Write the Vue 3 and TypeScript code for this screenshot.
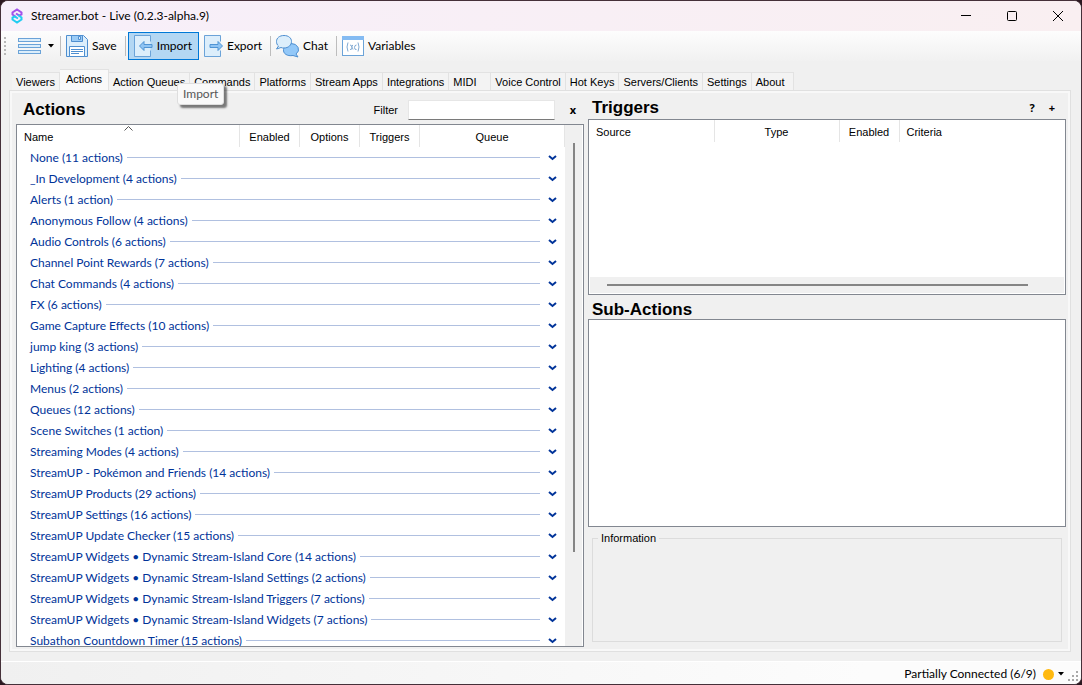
<script setup lang="ts">
import { ref } from 'vue'

interface Group {
  name: string
  count: number
}

const tabs: string[] = [
  'Viewers', 'Actions', 'Action Queues', 'Commands', 'Platforms', 'Stream Apps', 'Integrations',
  'MIDI', 'Voice Control', 'Hot Keys', 'Servers/Clients', 'Settings', 'About',
]
const activeTab = ref('Actions')
const filter = ref('')

const groups: Group[] = [
  { name: 'None', count: 11 },
  { name: '_In Development', count: 4 },
  { name: 'Alerts', count: 1 },
  { name: 'Anonymous Follow', count: 4 },
  { name: 'Audio Controls', count: 6 },
  { name: 'Channel Point Rewards', count: 7 },
  { name: 'Chat Commands', count: 4 },
  { name: 'FX', count: 6 },
  { name: 'Game Capture Effects', count: 10 },
  { name: 'jump king', count: 3 },
  { name: 'Lighting', count: 4 },
  { name: 'Menus', count: 2 },
  { name: 'Queues', count: 12 },
  { name: 'Scene Switches', count: 1 },
  { name: 'Streaming Modes', count: 4 },
  { name: 'StreamUP - Pokémon and Friends', count: 14 },
  { name: 'StreamUP Products', count: 29 },
  { name: 'StreamUP Settings', count: 16 },
  { name: 'StreamUP Update Checker', count: 15 },
  { name: 'StreamUP Widgets • Dynamic Stream-Island Core', count: 14 },
  { name: 'StreamUP Widgets • Dynamic Stream-Island Settings', count: 2 },
  { name: 'StreamUP Widgets • Dynamic Stream-Island Triggers', count: 7 },
  { name: 'StreamUP Widgets • Dynamic Stream-Island Widgets', count: 7 },
  { name: 'Subathon Countdown Timer', count: 15 },
]

const label = (g: Group): string => `${g.name} (${g.count} ${g.count === 1 ? 'action' : 'actions'})`
</script>

<template>
  <div class="window">
    <header class="titlebar">
      <svg class="logo" width="12" height="16" viewBox="0 0 12 16" fill="none" stroke-width="2">
        <path d="M5 9 1.500 6.500V4.500L6 1.500l4.500 3v2L8.500 7.500 5 5.500" stroke="#a352ea" />
        <path d="M7 7l3.500 2.500v2L6 14.500l-4.500-3v-2L3.500 8.500 7 10.500" stroke="#22cdf0" />
      </svg>
      <span class="title">Streamer.bot - Live (0.2.3-alpha.9)</span>
      <div class="caption">
        <button aria-label="Minimize"><svg width="12" height="12"><path d="M1 5.500h10" /></svg></button>
        <button aria-label="Maximize"><svg width="12" height="12"><rect x="1.500" y="1.500" width="9" height="9" rx="1" /></svg></button>
        <button aria-label="Close"><svg width="12" height="12"><path d="M1 1l10 10M11 1 1 11" /></svg></button>
      </div>
    </header>

    <nav class="toolbar" aria-label="Main toolbar">
      <span class="grip"></span>
      <button class="tool menu" aria-label="Menu">
        <svg width="24" height="20" fill="#dceefb" stroke="#6ba3d8">
          <rect x=".5" y="2.500" width="22" height="3" />
          <rect x=".5" y="8.500" width="22" height="3" />
          <rect x=".5" y="14.500" width="22" height="3" />
        </svg>
        <svg width="6" height="4"><path d="M0 0h6L3 3.500z" /></svg>
      </button>
      <span class="sep"></span>
      <button class="tool">
        <svg width="22" height="22" fill="#dceefb" stroke="#4f8fd0">
          <path d="M.5.5h17l4 4v17H.5z" />
          <path d="M5.500.5h11v6h-11z" fill="#9bccf6" />
          <path d="M12.500 1.500h2v3h-2z" />
          <path d="M3.500 11.500h15v10h-15z" fill="#fff" />
          <path d="M5 14.500h12M5 16.500h12M5 18.500h8" />
        </svg>Save
      </button>
      <span class="sep"></span>
      <button class="tool hot">
        <svg width="19" height="22" fill="#dceefb" stroke="#6ba3d8">
          <path d="M16.500 6.500v-6H.5v21h16v-6" />
          <path d="M5.500 11l4.500-4.500v3h8v3h-8v3z" fill="#8fc4f3" stroke="#4f94d4" />
        </svg>Import
      </button>
      <button class="tool">
        <svg width="19" height="22" fill="#dceefb" stroke="#6ba3d8">
          <path d="M16.500 6.500v-6H.5v21h16v-6" />
          <path d="M18.500 11L14 6.500v3H6v3h8v3z" fill="#8fc4f3" stroke="#4f94d4" />
        </svg>Export
      </button>
      <span class="sep"></span>
      <button class="tool">
        <svg width="23" height="23" fill="#dceefb" stroke="#4f8fd0">
          <path d="M15 8.500a7.500 6 0 0 1 5 10.500l2 3-5-1.500c-6 1-10-2-9.500-6 .5-3.500 3-6 7.500-6z" fill="#93c8f8" />
          <path d="M8 .5c4.500 0 7.500 2.500 7.500 6s-3 6.500-7.500 6.500c-1 0-2 0-3-.5L.5 14l2-3c-1.500-1-2-3-2-4.500C.5 3 3.500.5 8 .5z" />
        </svg>Chat
      </button>
      <span class="sep"></span>
      <button class="tool">
        <svg width="22" height="22" fill="none" stroke="#6ba3d8">
          <rect x=".5" y="1.500" width="21" height="19" fill="#fff" />
          <path d="M0 3h22" stroke="#84bbf2" stroke-width="4" />
          <path d="M6 7.500q-2 4.500 0 9M16 7.500q2 4.500 0 9M8 10q2 0 2 2.500T8 14.500M11 10q-2 1-1 2.500t1 2M14.500 10q-2 0-2 2.500t2 2" stroke="#7fa9d3" />
        </svg>Variables
      </button>
    </nav>

    <div class="tabs" role="tablist">
      <button
        v-for="t in tabs"
        :key="t"
        role="tab"
        class="tab"
        :class="{ active: t === activeTab }"
        :aria-selected="t === activeTab"
        @click="activeTab = t"
      >{{ t }}</button>
      <div class="tooltip" role="tooltip">Import</div>
    </div>

    <main class="page">
      <section class="left">
        <div class="head">
          <h2>Actions</h2>
          <label for="filter">Filter</label>
          <input id="filter" v-model="filter" type="text">
          <button class="mini" aria-label="Clear filter" @click="filter = ''">x</button>
        </div>
        <div class="box actions">
          <div class="scroll">
            <table>
              <thead>
                <tr>
                  <th class="start">Name
                    <svg class="sort" width="9" height="5"><path d="M.5 4.500l4-4 4 4" /></svg>
                  </th>
                  <th class="flag">Enabled</th>
                  <th class="flag">Options</th>
                  <th class="flag">Triggers</th>
                  <th class="queue">Queue</th>
                </tr>
              </thead>
              <tbody>
                <tr v-for="g in groups" :key="g.name">
                  <td colspan="5">
                    <button class="group">
                      <span>{{ label(g) }}</span>
                      <i></i>
                      <svg width="9" height="6"><path d="M1 1l3.500 3L8 1" /></svg>
                    </button>
                  </td>
                </tr>
              </tbody>
            </table>
          </div>
          <div class="vbar"><span></span></div>
        </div>
      </section>

      <section class="right">
        <div class="head triggers-head">
          <h2>Triggers</h2>
          <button class="mini" aria-label="Help">?</button>
          <button class="mini" aria-label="Add trigger">+</button>
        </div>
        <div class="box triggers">
          <table>
            <thead>
              <tr>
                <th class="wide start">Source</th>
                <th class="wide">Type</th>
                <th class="flag">Enabled</th>
                <th class="start last">Criteria</th>
              </tr>
            </thead>
          </table>
          <div class="hbar"><span></span></div>
        </div>
        <h2 class="sub">Sub-Actions</h2>
        <div class="box subactions"></div>
        <fieldset>
          <legend>Information</legend>
        </fieldset>
      </section>
    </main>

    <footer class="status">
      <button>Partially Connected (6/9) <b></b>
        <svg width="6" height="4"><path d="M0 0h6L3 3.500z" /></svg>
      </button>
      <svg class="resize" width="11" height="11" fill="#a8a8a8">
        <path d="M8 0h2v2H8zM4 4h2v2H4zM8 4h2v2H8zM0 8h2v2H0zM4 8h2v2H4zM8 8h2v2H8z" />
      </svg>
    </footer>
  </div>
</template>

<style>
html,
body {
  background: #2b1820;
}
</style>

<style scoped>
* {
  box-sizing: border-box;
}
.window {
  display: flex;
  flex-direction: column;
  height: 100vh;
  overflow: hidden;
  border: 1px solid #453039;
  border-radius: 8px;
  background: #f0f0f0;
  color: #000;
  font: 12px/16px Lato, "Open Sans", sans-serif;
}
button {
  border: 0;
  padding: 0;
  background: none;
  color: inherit;
  font: inherit;
}
h2 {
  margin: 0;
  font: bold 17px/20px "Liberation Sans", Arial, sans-serif;
}
.titlebar {
  display: flex;
  align-items: center;
  height: 30px;
  flex: none;
  padding-left: 10px;
  background: linear-gradient(90deg, #f7effa, #f9eff1);
}
.title {
  margin-left: 8px;
}
.caption {
  display: flex;
  margin-left: auto;
}
.caption button {
  width: 46px;
  height: 28px;
}
.caption svg {
  display: block;
  margin: 0 auto;
  fill: none;
  stroke: #000;
}
.toolbar {
  display: flex;
  align-items: center;
  height: 30px;
  flex: none;
  padding-left: 3px;
  background: linear-gradient(#fdfdfd, #f1f1f1);
}
.grip {
  width: 2px;
  height: 18px;
  margin-right: 8px;
  background: repeating-linear-gradient(#b8b8b8 0 2px, transparent 2px 4px);
}
.tool {
  display: flex;
  align-items: center;
  gap: 4px;
  height: 28px;
  padding: 0 5px 0 4px;
  border: 1px solid transparent;
}
.menu {
  gap: 6px;
  padding: 0 3px;
}
.hot {
  margin-left: 2px;
  padding: 0 6px 0 5px;
  border-color: #0078d7;
  background: #b3d7f3;
}
.sep {
  width: 1px;
  height: 20px;
  margin-left: 2px;
  background: #bdbdbd;
}
.tabs {
  position: relative;
  z-index: 1;
  display: flex;
  align-items: flex-end;
  flex: none;
  height: 29px;
  padding-left: 11px;
}
.tab {
  min-width: 42px;
  height: 18px;
  padding: 0 4px;
  border: 1px solid #e2e2e2;
  border-width: 1px 1px 0 0;
  background: #f3f3f3;
  font: 11px/16px "Liberation Sans", Arial, sans-serif;
  text-align: left;
}
.tab.active {
  height: 21px;
  padding: 0 6px 3px;
  background: #f9f9f9;
}
.tooltip {
  position: absolute;
  left: 176px;
  top: 22px;
  padding: 2px 5px;
  border: 1px solid #dedede;
  border-radius: 3px;
  background: #f9f9f9;
  color: #575757;
  box-shadow: 3px 3px 2px #00000080;
}
.page {
  display: flex;
  gap: 4px;
  flex: 1;
  min-height: 0;
  margin: 0 10px 9px 8px;
  padding: 4px 4px 4px 6px;
  border: 1px solid #e0e0e0;
  box-shadow: inset 0 0 0 2px #f8f8f8;
}
.left {
  display: flex;
  flex-direction: column;
  flex: 568;
  min-width: 0;
}
.right {
  display: flex;
  flex-direction: column;
  flex: 478;
  min-width: 0;
}
.head {
  display: flex;
  align-items: center;
  flex: none;
  height: 29px;
  padding: 0 3px 0 7px;
}
.head h2 {
  margin-right: auto;
}
.head label,
legend,
th {
  font: 11px/16px "Liberation Sans", Arial, sans-serif;
}
.head input {
  width: 147px;
  height: 20px;
  margin: 0 10px;
  border: 1px solid #e6e6e6;
  border-bottom-color: #7a7a7a;
  background: #fff;
  font: 11px/16px "Liberation Sans", Arial, sans-serif;
}
.mini {
  width: 16px;
  font: bold 11px/16px "Open Sans", sans-serif;
}
.triggers-head {
  height: 24px;
  gap: 4px;
  padding: 1px 6px 0 4px;
}
.box {
  border: 1px solid #828790;
  background: #fff;
}
.actions {
  display: flex;
  flex: 1;
  min-height: 0;
  padding-right: 1px;
}
.scroll {
  flex: 1;
  overflow: hidden;
}
table {
  width: 100%;
  table-layout: fixed;
  border-collapse: collapse;
}
th {
  position: relative;
  height: 22px;
  padding: 1px 0 0;
  border-right: 1px solid #e5e5e5;
  text-align: center;
}
th.start {
  padding-left: 7px;
  text-align: left;
}
th.flag {
  width: 60px;
}
th.queue {
  width: 145px;
}
th.wide {
  width: 125px;
}
th.last {
  border: 0;
}
.sort {
  position: absolute;
  left: 50%;
  top: 1px;
  margin-left: -4px;
  fill: none;
  stroke: #555;
}
td {
  padding: 0;
}
.group {
  display: flex;
  align-items: center;
  width: 100%;
  height: 21px;
  padding: 0 8px 0 13px;
  color: #039;
  white-space: nowrap;
}
.group i {
  flex: 1;
  height: 1px;
  margin: 0 8px 0 4px;
  background: #b0c0e0;
}
.group svg {
  fill: none;
  stroke: #039;
  stroke-width: 2;
}
.vbar {
  width: 17px;
  padding: 18px 7px 0 8px;
  background: #f0f0f0;
}
.vbar span {
  display: block;
  width: 2px;
  height: 409px;
  background: #858585;
}
.triggers {
  display: flex;
  flex-direction: column;
  justify-content: space-between;
  flex: none;
  height: 176px;
}
.hbar {
  height: 16px;
  margin: 1px;
  padding: 7px 36px 0 17px;
  background: #f0f0f0;
}
.hbar span {
  display: block;
  height: 2px;
  background: #858585;
}
.sub {
  flex: none;
  height: 24px;
  padding: 5px 4px 0;
}
.subactions {
  flex: 1;
}
fieldset {
  flex: none;
  height: 112px;
  min-width: 0;
  margin: 3px 4px 5px;
  padding: 0 5px;
  border: 1px solid #dcdcdc;
}
legend {
  padding: 0 3px;
}
.status {
  display: flex;
  align-items: center;
  justify-content: flex-end;
  flex: none;
  height: 23px;
  padding-top: 2px;
  border-top: 1px solid #fff;
  background: linear-gradient(90deg, #f0f0f0, #fcfcfc 80%);
}
.status button {
  display: flex;
  align-items: center;
  gap: 4px;
}
.status b {
  width: 11px;
  height: 11px;
  margin-left: 3px;
  border-radius: 50%;
  background: #ffb90f;
}
.resize {
  align-self: flex-end;
  margin: 0 2px 2px 4px;
}
</style>
